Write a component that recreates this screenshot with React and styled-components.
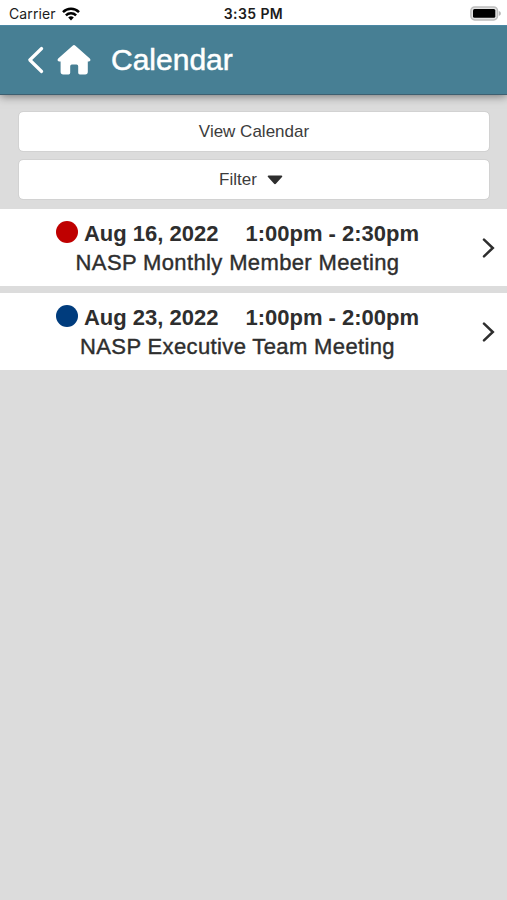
import React from "react";
import styled, { createGlobalStyle } from "styled-components";

const GlobalStyle = createGlobalStyle`
  * {
    box-sizing: border-box;
  }
  body {
    margin: 0;
    background-color: #dcdcdc;
    color: #2e2e2e;
    font-family: "Liberation Sans", Arial, sans-serif;
  }
  button {
    font-family: inherit;
    color: inherit;
  }
`;

const Screen = styled.div`
  min-height: 100vh;
  overflow: hidden;
`;

const StatusBar = styled.div`
  position: relative;
  z-index: 1;
  height: 25px;
  padding: 2px 6px 0 9px;
  display: grid;
  grid-template-columns: 1fr auto 1fr;
  align-items: center;
  background-color: white;
  color: #1c1c1c;
  font-family: Inter, sans-serif;
  font-size: 14px;
`;

const Carrier = styled.div`
  display: flex;
  align-items: center;
  gap: 6px;
  letter-spacing: 0.1px;
`;

const Time = styled.div`
  margin-right: 3px;
  font-size: 14px;
  font-weight: 600;
  letter-spacing: 0.4px;
`;

const Battery = styled.div`
  display: flex;
  justify-content: flex-end;
`;

const Header = styled.header`
  height: 70px;
  padding: 0 27px;
  display: flex;
  align-items: center;
  background-color: #477f94;
  border-top: 1px solid #4c88a4;
  border-bottom: 1px solid #3d5f70;
  box-shadow: 0 1px 9px rgba(0, 0, 0, 0.5);
`;

const NavButton = styled.button`
  display: flex;
  padding: 0;
  margin-right: ${(props) => props.$gap};
  border: none;
  background: none;
`;

const Title = styled.h1`
  margin: 0;
  color: white;
  font-size: 30px;
  font-weight: 400;
  line-height: 34px;
  -webkit-text-stroke: 0.5px white;
`;

const Actions = styled.div`
  display: flex;
  flex-direction: column;
  gap: 7px;
  padding: 16px 17px 9px 18px;
`;

const ActionButton = styled.button`
  height: 41px;
  padding: 1px 0 0;
  display: flex;
  align-items: center;
  justify-content: center;
  gap: 10px;
  border: 1px solid #d2d2d2;
  border-radius: 5px;
  background-color: white;
  background-clip: padding-box;
  color: #3c3c3c;
  font-size: 17px;
`;

const FilterButton = styled(ActionButton)`
  padding-right: 6px;
`;

const EventList = styled.ul`
  margin: 0;
  padding: 0;
  list-style: none;
  display: flex;
  flex-direction: column;
  gap: 7px;
`;

const EventRow = styled.li`
  height: 77px;
  padding-right: 12px;
  display: flex;
  align-items: center;
  background-color: white;
`;

const EventBody = styled.div`
  flex: 1;
  display: flex;
  flex-direction: column;
  align-items: center;
  padding-right: 7px;
`;

const When = styled.div`
  display: flex;
  align-items: center;
  font-size: 22px;
  font-weight: 700;
  line-height: 29px;
  white-space: nowrap;
`;

const Dot = styled.span`
  width: 22px;
  height: 22px;
  margin: -2px 6px 0 0;
  border-radius: 50%;
  background-color: ${(props) => props.$color};
`;

const Hours = styled.span`
  margin-left: 27px;
`;

const EventName = styled.div`
  font-size: 22px;
  line-height: 29px;
  letter-spacing: 0.37px;
  -webkit-text-stroke: 0.4px #2e2e2e;
`;

const WifiIcon = () => (
  <svg width="18" height="14" viewBox="0 0 18 14" fill="none" stroke="#000" strokeWidth="2.5">
    <path d="M1 5.1a11.4 11.4 0 0 1 16 0" />
    <path d="M3.9 8.3a7.3 7.3 0 0 1 10.2 0" />
    <path d="M9 13.4 6.2 10.6a4 4 0 0 1 5.6 0z" fill="#000" stroke="none" />
  </svg>
);

const BatteryIcon = () => (
  <svg width="31" height="15" viewBox="0 0 31 15">
    <rect x="0.9" y="0.9" width="26.6" height="13" rx="3.8" fill="#e2e2e2" stroke="#bdbdbd" strokeWidth="1.5" />
    <rect x="3" y="3" width="22.3" height="8.8" rx="1.5" fill="#000" />
    <path d="M28.8 5c1.7.6 2 1.6 2 2.4s-.3 1.8-2 2.4z" fill="#b5b5b5" />
  </svg>
);

const BackIcon = () => (
  <svg width="18" height="28" viewBox="0 0 18 28" fill="none" stroke="white" strokeWidth="3.2">
    <path d="M14.6 2.5 2.8 14l11.8 11.5" strokeLinecap="round" strokeLinejoin="round" />
  </svg>
);

const HomeIcon = () => (
  <svg width="34" height="30" viewBox="0 0 34 30" fill="white">
    <path d="M15.6.8a2 2 0 0 1 2.8 0L32.8 13.6c1.2 1.2.6 2.8-1 2.8H30.8V26.8a2.6 2.6 0 0 1-2.6 2.6H22.8a1.6 1.6 0 0 1-1.6-1.6V21.2a1.6 1.6 0 0 0-1.6-1.6H14.8a1.6 1.6 0 0 0-1.6 1.6v6.6a1.6 1.6 0 0 1-1.6 1.6H6.2a2.6 2.6 0 0 1-2.6-2.6V16.4H2.2c-1.6 0-2.2-1.6-1-2.8z" />
  </svg>
);

const CaretIcon = () => (
  <svg width="16" height="10" viewBox="0 0 16 10" fill="#2e2e2e">
    <path d="M1.6.6h12.8c.9 0 1.2.8.6 1.4L9.1 8.6c-.7.7-1.5.7-2.2 0L1 2C.4 1.4.7.6 1.6.6z" />
  </svg>
);

const ChevronIcon = () => (
  <svg width="13" height="20" viewBox="0 0 13 20" fill="none" stroke="#2e2e2e" strokeWidth="2.5">
    <path d="m2 1.7 8.8 8.3L2 18.3" strokeLinecap="round" />
  </svg>
);

const events = [
  {
    color: "#bf0000",
    date: "Aug 16, 2022",
    hours: "1:00pm - 2:30pm",
    name: "NASP Monthly Member Meeting",
  },
  {
    color: "#003c7d",
    date: "Aug 23, 2022",
    hours: "1:00pm - 2:00pm",
    name: "NASP Executive Team Meeting",
  },
];

const App = () => (
  <Screen>
    <GlobalStyle />
    <StatusBar>
      <Carrier>
        Carrier
        <WifiIcon />
      </Carrier>
      <Time>3:35 PM</Time>
      <Battery>
        <BatteryIcon />
      </Battery>
    </StatusBar>
    <Header>
      <NavButton $gap="12px" aria-label="Back">
        <BackIcon />
      </NavButton>
      <NavButton $gap="20px" aria-label="Home">
        <HomeIcon />
      </NavButton>
      <Title>Calendar</Title>
    </Header>
    <Actions>
      <ActionButton>View Calendar</ActionButton>
      <FilterButton>
        Filter
        <CaretIcon />
      </FilterButton>
    </Actions>
    <EventList>
      {events.map((event) => (
        <EventRow key={event.date}>
          <EventBody>
            <When>
              <Dot $color={event.color} />
              {event.date}
              <Hours>{event.hours}</Hours>
            </When>
            <EventName>{event.name}</EventName>
          </EventBody>
          <ChevronIcon />
        </EventRow>
      ))}
    </EventList>
  </Screen>
);

export default App;
